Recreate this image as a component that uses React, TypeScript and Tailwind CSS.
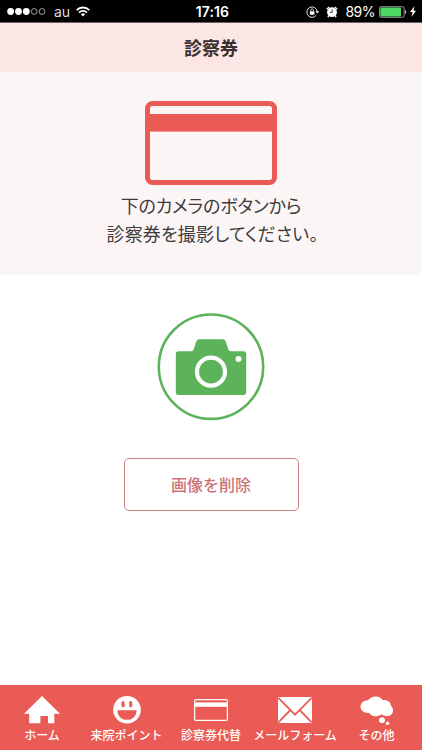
import React from 'react'

const RED = '#ea5b55'

function SignalDots() {
  return (
    <svg width="39" height="9" viewBox="0 0 39 9" className="shrink-0">
      {[3.6, 11.5, 19.3].map((x) => (
        <circle key={x} cx={x} cy="4.5" r="3.4" fill="#fff" />
      ))}
      {[27.2, 35].map((x) => (
        <circle key={x} cx={x} cy="4.5" r="2.9" fill="none" stroke="#ccc" strokeWidth="0.8" />
      ))}
    </svg>
  )
}

function WifiIcon() {
  return (
    <svg width="14" height="11" viewBox="0 0 14 11" fill="none" stroke="#fff" strokeWidth="1.8" className="shrink-0">
      <path d="M0.7 4.1a8.9 8.9 0 0 1 12.6 0" />
      <path d="M3 6.6a5.7 5.7 0 0 1 8 0" />
      <path d="M7 10.5 4.9 8.3a3 3 0 0 1 4.2 0z" fill="#fff" stroke="none" />
    </svg>
  )
}

function RotationLockIcon() {
  return (
    <svg width="14" height="12" viewBox="0 0 14 12" className="shrink-0">
      <path d="M10.2 9.3A5.2 5.2 0 1 1 11.2 5.4" fill="none" stroke="#fff" strokeWidth="0.9" />
      <path d="M9.4 5.2h3.8L11.3 7.6z" fill="#fff" />
      <rect x="3.8" y="5.2" width="4.6" height="3.5" rx="0.4" fill="#fff" />
      <path d="M4.8 5.4V4.2a1.3 1.3 0 0 1 2.6 0v1.2" fill="none" stroke="#fff" strokeWidth="0.8" />
    </svg>
  )
}

function AlarmIcon() {
  return (
    <svg width="12" height="12" viewBox="0 0 12 12" className="shrink-0">
      <circle cx="6" cy="6.2" r="4.9" fill="#fff" />
      <path d="M0.8 3.2 3.2 1M11.2 3.2 8.8 1M2.8 9.7 1.9 11M9.2 9.7l.9 1.3" stroke="#fff" strokeWidth="1.4" fill="none" />
      <path d="M6.2 3.4v3H4" stroke="#000" strokeWidth="0.8" fill="none" />
    </svg>
  )
}

function BatteryIcon() {
  return (
    <svg width="28" height="12" viewBox="0 0 28 12" className="shrink-0">
      <rect x="0.5" y="0.7" width="24.6" height="10.6" rx="1.6" fill="none" stroke="#bbb" strokeWidth="0.8" />
      <rect x="1.4" y="1.6" width="20.6" height="8.8" rx="0.8" fill="#4cd964" />
      <path d="M26 4.1c1.7.5 1.7 3.3 0 3.8z" fill="#ccc" />
    </svg>
  )
}

function BoltIcon() {
  return (
    <svg width="6" height="11" viewBox="0 0 6 11" className="shrink-0">
      <path d="M4.6 0 0 6.1h2.6L1.4 11 6 4.7H3.4z" fill="#fff" />
    </svg>
  )
}

function CardIcon() {
  return (
    <svg width="132" height="84" viewBox="0 0 132 84">
      <rect x="2.5" y="2.5" width="127" height="79" rx="5" fill="none" stroke={RED} strokeWidth="5" />
      <rect x="2" y="13" width="128" height="17.6" fill={RED} />
    </svg>
  )
}

function CameraIcon() {
  return (
    <svg width="108" height="108" viewBox="0 0 108 108">
      <circle cx="54" cy="53.7" r="52.2" fill="#fff" stroke="#5cb35a" strokeWidth="2.6" />
      <path
        d="M21.5 38.3H33.5c1.8 0 2.8-.8 3.3-2.2l2.3-7.2c.5-1.8 1.5-2.7 3.2-2.7h23.4c1.7 0 2.7.9 3.2 2.7l2.3 7.2c.5 1.4 1.5 2.2 3.3 2.2h12a2.7 2.7 0 0 1 2.7 2.7v38.3a2.7 2.7 0 0 1-2.7 2.7h-65a2.7 2.7 0 0 1-2.7-2.7V41a2.7 2.7 0 0 1 2.7-2.7z"
        fill="#5cb35a"
      />
      <circle cx="54" cy="58.7" r="14" fill="none" stroke="#fff" strokeWidth="4.2" />
      <circle cx="81.5" cy="46" r="3" fill="#fff" />
    </svg>
  )
}

function HomeIcon() {
  return (
    <svg width="36" height="28" viewBox="0 0 36 28" fill="#fff">
      <path d="M18 0 36 17.7h-5.7v9.6H24v-7.2h-7.6v7.2H5.2v-9.6H0z" />
    </svg>
  )
}

function SmileIcon() {
  return (
    <svg width="28" height="28" viewBox="0 0 28 28">
      <circle cx="14" cy="13.8" r="13.8" fill="#fff" />
      <ellipse cx="10.1" cy="8.2" rx="1.6" ry="3.3" fill={RED} />
      <ellipse cx="17.7" cy="8.2" rx="1.6" ry="3.3" fill={RED} />
      <path d="M4.4 14.2h19.2c0 5.8-4 9.6-9.6 9.6s-9.6-3.8-9.6-9.6z" fill={RED} />
    </svg>
  )
}

function SmallCardIcon() {
  return (
    <svg width="34" height="22" viewBox="0 0 34 22">
      <rect x="0.6" y="0.6" width="32.8" height="20.8" rx="1.3" fill="none" stroke="#fff" strokeWidth="1.2" />
      <rect x="0.6" y="3.4" width="32.8" height="4.4" fill="#fff" />
    </svg>
  )
}

function MailIcon() {
  return (
    <svg width="34" height="26" viewBox="0 0 34 26">
      <rect width="34" height="26" fill="#fff" />
      <path d="M0.3 0.8 17 17.6 33.7 0.8M0.3 25.4 12.4 13M33.7 25.4 21.6 13" fill="none" stroke={RED} strokeWidth="1.8" />
    </svg>
  )
}

function CloudIcon() {
  return (
    <svg width="34" height="30" viewBox="0 0 34 30" fill="#fff">
      <path d="M8.2 4.3C10 1.700 13 .5 16 .6c3 .1 5.300 1.400 6.500 3.500 4.300-.7 8.300 1.600 8.600 5.900 1.600 1.500 2.200 3.600 1.800 5.700-.6 3.200-4 5.100-7.400 4-2-.2-3.300-.7-4.300-1.500-2 1.800-4.700 2.500-7.200 1.900-2.300-.500-3.800-1.600-4.700-3.200C4.800 17.500.5 14.800.5 10.800c0-3.800 3.500-6.600 7.700-6.500z" />
      <circle cx="22" cy="24.2" r="2.9" />
      <circle cx="27.5" cy="27.3" r="1.7" />
    </svg>
  )
}

const tabs = [
  { label: 'ホーム', Icon: HomeIcon, width: 'w-[84px]', box: 'pt-[11px]' },
  { label: '来院ポイント', Icon: SmileIcon, width: 'w-[85px]', box: 'pt-[11px]' },
  { label: '診察券代替', Icon: SmallCardIcon, width: 'w-[84px]', box: 'pt-[14px]' },
  { label: 'メールフォーム', Icon: MailIcon, width: 'w-[84px]', box: 'pt-[12px]' },
  { label: 'その他', Icon: CloudIcon, width: 'w-[79px]', box: 'pt-[11px]' },
]

export default function App() {
  return (
    <div className="flex h-[750px] w-[422px] flex-col overflow-hidden bg-white font-['Noto_Sans_CJK_JP',sans-serif] text-[#403b3b]">
      {/* Status bar */}
      <div className="grid h-[23px] grid-cols-[1fr_auto_1fr] items-center border-b border-[#6b6463] bg-black pt-px pr-[6px] pl-[7px] font-[Inter,sans-serif] text-white">
        <div className="flex items-center">
          <SignalDots />
          <span className="ml-[8px] text-[14px] leading-none text-[#ddd]">au</span>
          <span className="ml-[6px]">
            <WifiIcon />
          </span>
        </div>
        <div className="pl-[2px] text-[14px] leading-none font-semibold tracking-[0.1px]">17:16</div>
        <div className="flex items-center justify-end">
          <RotationLockIcon />
          <span className="ml-[6px]">
            <AlarmIcon />
          </span>
          <span className="ml-[7px] text-[14px] leading-none tracking-[-0.5px]">89%</span>
          <span className="ml-[4px]">
            <BatteryIcon />
          </span>
          <span className="ml-[3px]">
            <BoltIcon />
          </span>
        </div>
      </div>

      {/* Title */}
      <h1 className="flex h-[49px] items-center justify-center bg-[#fce6e5] pb-[2px] text-[18px] leading-none font-bold text-[#3a3030]">
        診察券
      </h1>

      {/* Guide */}
      <section className="flex h-[203px] flex-col items-center bg-[#fcf5f5] pt-[29px]">
        <CardIcon />
        <p className="mt-[6px] text-center text-[18px] leading-[28px] [font-feature-settings:'palt']">
          <span className="block tracking-[-0.2px]">下のカメラのボタンから</span>
          <span className="block pl-[3px] tracking-[0.15px]">診察券を撮影してください。</span>
        </p>
      </section>

      {/* Actions */}
      <main className="flex flex-1 flex-col items-center pt-[38px]">
        <button className="block h-[108px]">
          <CameraIcon />
        </button>
        <button className="mt-[37px] h-[53px] w-[175px] rounded-[5px] border border-[#d08080] pb-[2px] text-[16px] leading-none font-medium text-[#cc7474]">
          画像を削除
        </button>
      </main>

      {/* Tab bar */}
      <nav className="flex h-[65px] bg-[#ea5b55] text-[12px] font-medium whitespace-nowrap text-white">
        {tabs.map(({ label, Icon, width, box }) => (
          <a key={label} className={`flex flex-col items-center ${width}`}>
            <span className={`flex h-[41px] shrink-0 items-start ${box}`}>
              <Icon />
            </span>
            <span className="leading-[18px]">{label}</span>
          </a>
        ))}
      </nav>
    </div>
  )
}
